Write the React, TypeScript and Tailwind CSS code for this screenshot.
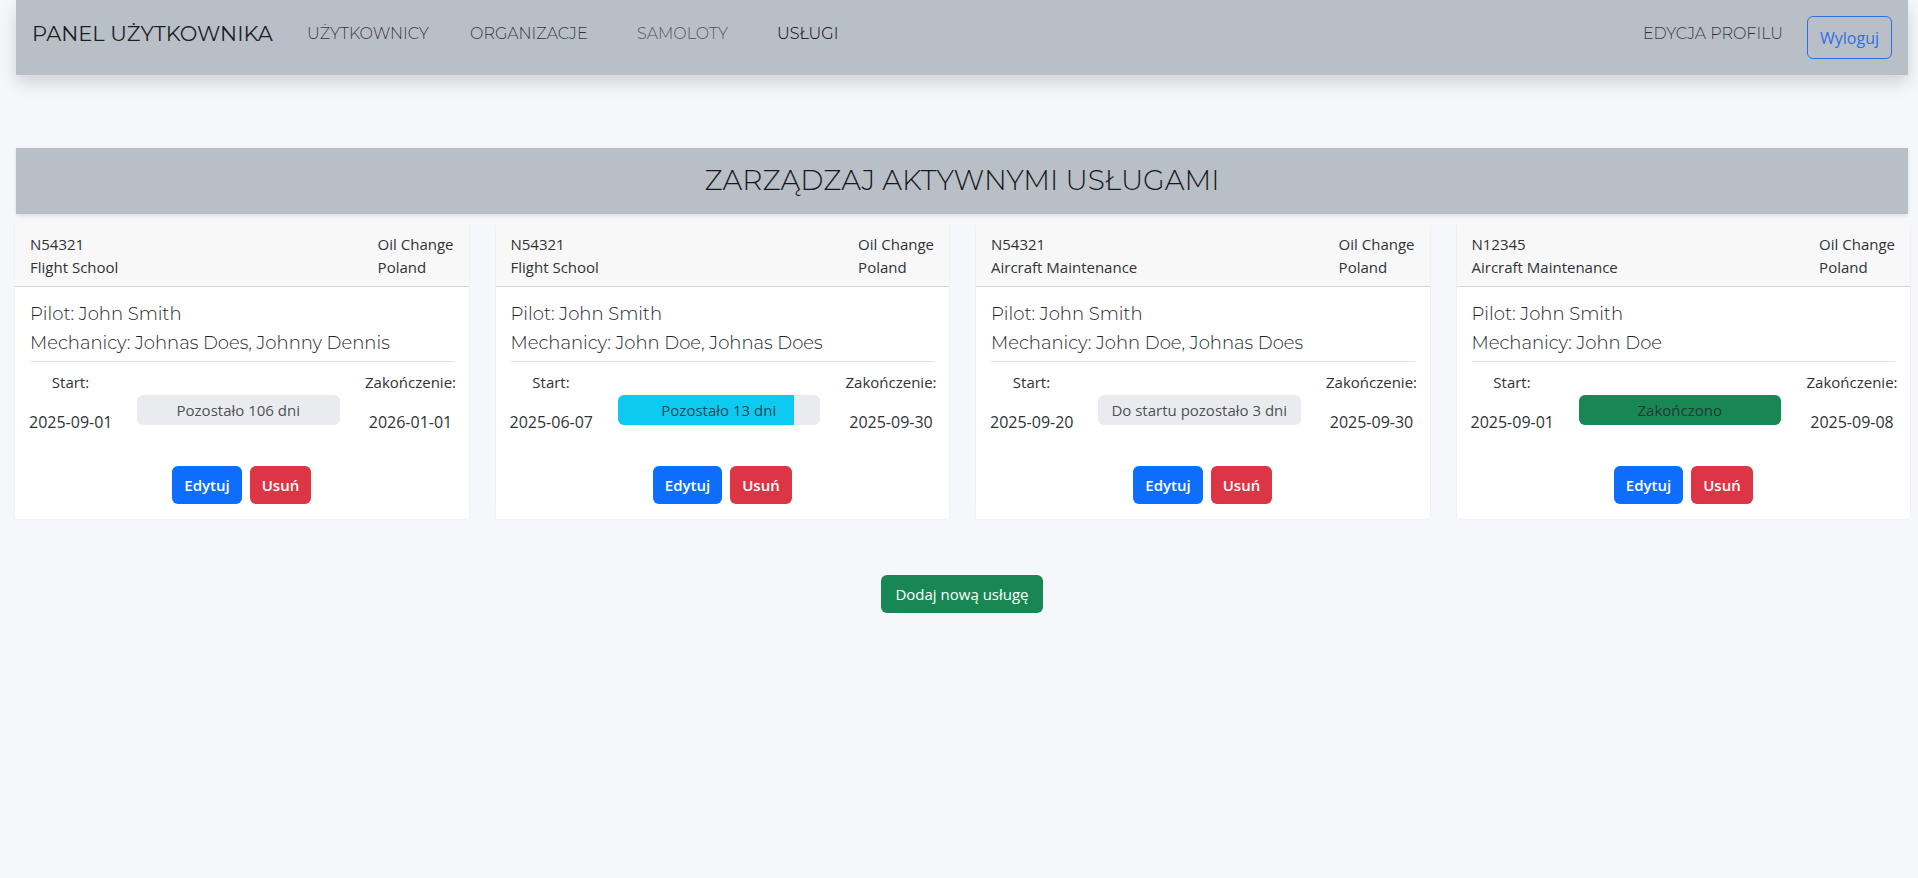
type Service = {
  id: number;
  plane: string;
  organization: string;
  kind: string;
  place: string;
  mechanics: string;
  start: string;
  end: string;
  status: string;
  progress: number;
  fill: string;
};

const services: Service[] = [
  { id: 1, plane: "N54321", organization: "Flight School", kind: "Oil Change", place: "Poland", mechanics: "Johnas Does, Johnny Dennis", start: "2025-09-01", end: "2026-01-01", status: "Pozostało 106 dni", progress: 0, fill: "bg-[#0dcaf0]" },
  { id: 2, plane: "N54321", organization: "Flight School", kind: "Oil Change", place: "Poland", mechanics: "John Doe, Johnas Does", start: "2025-06-07", end: "2025-09-30", status: "Pozostało 13 dni", progress: 87, fill: "bg-[#0dcaf0]" },
  { id: 3, plane: "N54321", organization: "Aircraft Maintenance", kind: "Oil Change", place: "Poland", mechanics: "John Doe, Johnas Does", start: "2025-09-20", end: "2025-09-30", status: "Do startu pozostało 3 dni", progress: 0, fill: "bg-[#0dcaf0]" },
  { id: 4, plane: "N12345", organization: "Aircraft Maintenance", kind: "Oil Change", place: "Poland", mechanics: "John Doe", start: "2025-09-01", end: "2025-09-08", status: "Zakończono", progress: 100, fill: "bg-[#198754]" },
];

const display = "font-['Montserrat','Inter',sans-serif]";

function NavBar() {
  return (
    <nav className={`${display} mr-[10px] ml-4 flex h-[75px] items-start bg-[#b9bfc6] px-4 pt-4 text-base leading-9 font-light whitespace-nowrap shadow-[0_8px_16px_rgba(0,0,0,0.15)]`}>
      <a href="#" className="w-[275px] text-[21px] font-normal text-black/85">PANEL UŻYTKOWNIKA</a>
      <a href="#" className="w-[163px] text-black/75">UŻYTKOWNICY</a>
      <a href="#" className="w-[167px] text-black/75">ORGANIZACJE</a>
      <a href="#" className="w-[140px] text-black/60">SAMOLOTY</a>
      <a href="#" aria-current="page" className="text-black">USŁUGI</a>
      <a href="#" className="mr-6 ml-auto text-black/75">EDYCJA PROFILU</a>
      <button type="button" className="h-[43px] rounded-md border border-[#2f6fe4] px-3 font-['Segoe_UI','Open_Sans',sans-serif] text-base font-normal text-[#2f6fe4]">
        Wyloguj
      </button>
    </nav>
  );
}

function ServiceCard({ service }: { service: Service }) {
  return (
    <article className="rounded-b-sm border border-t-0 border-black/5 bg-white">
      <header className="flex h-[62px] justify-between border-b border-[#d4d5d5] bg-[#f8f8f8] px-[15px] pt-2 leading-[23px]">
        <p>{service.plane}<br />{service.organization}</p>
        <p>{service.kind}<br />{service.place}</p>
      </header>
      <div className="px-[15px] pt-[13px]">
        <div className={`${display} border-b border-[#dfe1e4] pb-[3px] text-[18px] leading-[29px] font-light text-[#212529]`}>
          <p>Pilot: John Smith</p>
          <p>Mechanicy: {service.mechanics}</p>
        </div>
      </div>
      <div className="grid grid-cols-[83px_1fr_92px] items-center gap-[25px] pt-2 pr-3 pl-[14px] text-center whitespace-nowrap">
        <dl className="leading-6">
          <dt>Start:</dt>
          <dd className="mt-4 text-base leading-6">{service.start}</dd>
        </dl>
        <div
          role="progressbar"
          aria-label="Postęp usługi"
          aria-valuenow={service.progress}
          className="mt-4 grid h-[30px] overflow-hidden rounded-md bg-[#e9ebee]"
        >
          <div className={`col-start-1 row-start-1 h-full ${service.fill}`} style={{ width: `${service.progress}%` }} />
          <span className="col-start-1 row-start-1 text-center leading-[30px] text-[#212529]/80">{service.status}</span>
        </div>
        <dl className="leading-6">
          <dt>Zakończenie:</dt>
          <dd className="mt-4 text-base leading-6">{service.end}</dd>
        </dl>
      </div>
      <div className="flex justify-center gap-2 pt-8 pb-[15px] font-semibold text-white">
        <button type="button" className="h-[38px] rounded-md bg-[#0d6efd] px-3">Edytuj</button>
        <button type="button" className="h-[38px] rounded-md bg-[#dc3545] px-3">Usuń</button>
      </div>
    </article>
  );
}

export default function App() {
  return (
    <div className="min-h-screen bg-[#f5f7fb] font-['Segoe_UI','Open_Sans',sans-serif] text-[15px] text-[#2f3337]">
      <NavBar />
      <main className="pt-[73px] pb-8">
        <h1 className={`${display} mr-[10px] ml-4 bg-[#b9bfc6] pb-[2px] text-center text-[28px] leading-[64px] font-light text-[#16191c] shadow-[0_2px_4px_rgba(0,0,0,0.1)]`}>
          ZARZĄDZAJ AKTYWNYMI USŁUGAMI
        </h1>
        <section className="mt-[11px] mr-[7px] ml-[14px] grid grid-cols-1 gap-[25px] md:grid-cols-2 xl:grid-cols-4">
          {services.map((service) => (
            <ServiceCard key={service.id} service={service} />
          ))}
        </section>
        <div className="mt-[55px] mr-[10px] ml-4 flex justify-center">
          <button type="button" className="h-[38px] rounded-md bg-[#198754] px-[14px] font-medium text-white">Dodaj nową usługę</button>
        </div>
      </main>
    </div>
  );
}
